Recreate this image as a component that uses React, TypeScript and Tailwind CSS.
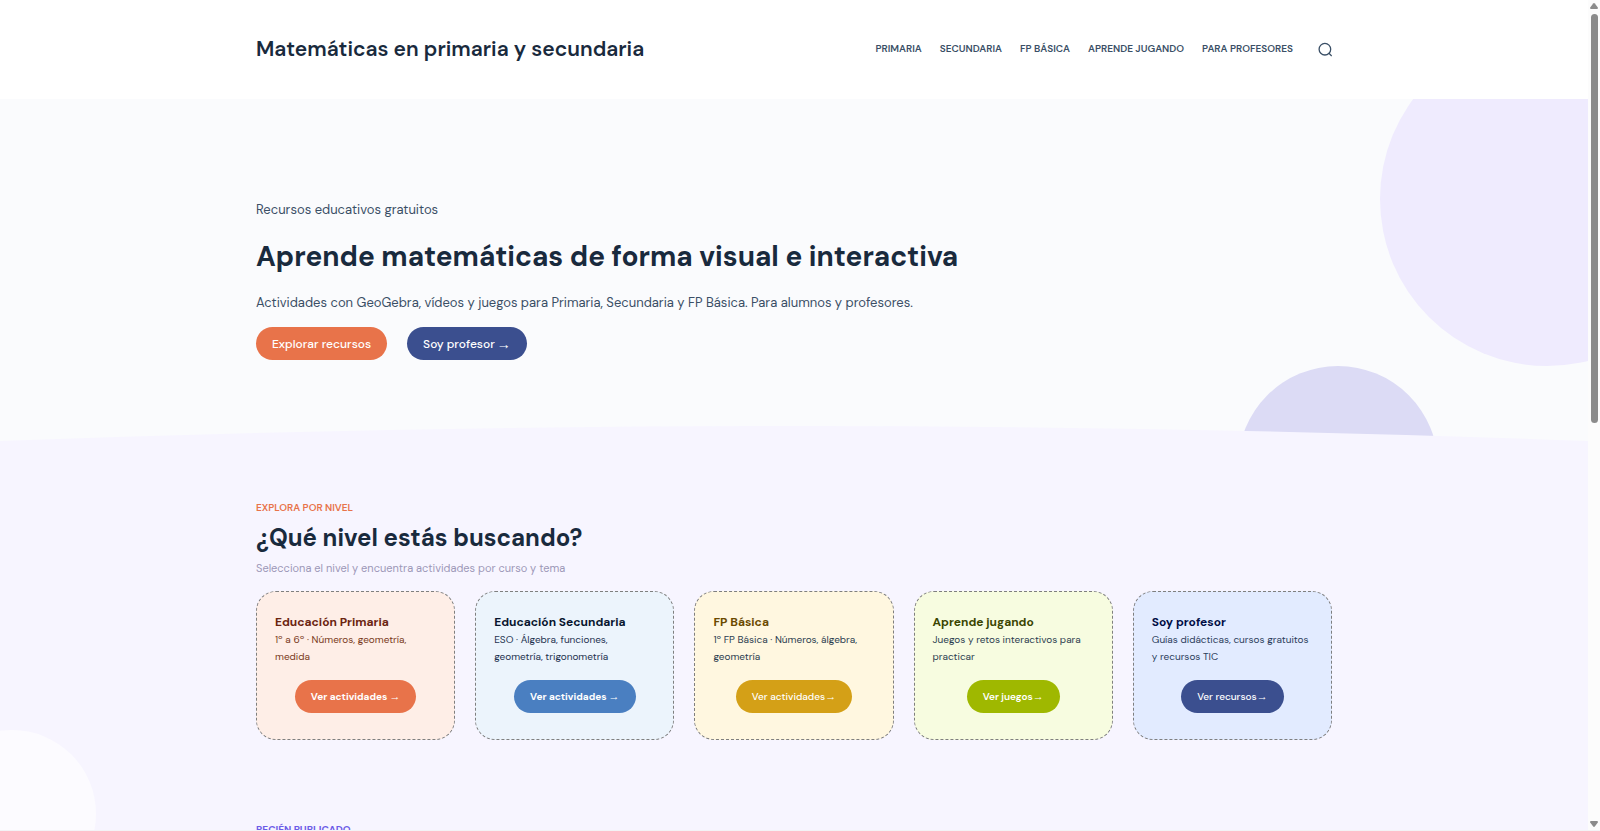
type Level = {
  title: string;
  text: string;
  action: string;
  spaced?: boolean;
  card: string;
  heading: string;
  body: string;
  button: string;
};

const navItems = ["Primaria", "Secundaria", "FP Básica", "Aprende jugando", "Para profesores"];

const levels: Level[] = [
  {
    title: "Educación Primaria",
    text: "1º a 6º · Números, geometría, medida",
    action: "Ver actividades",
    spaced: true,
    card: "bg-[#feeee7]",
    heading: "text-[#6b2410]",
    body: "text-[#7a3b22]",
    button: "bg-[#e8734a] font-bold",
  },
  {
    title: "Educación Secundaria",
    text: "ESO · Álgebra, funciones, geometría, trigonometría",
    action: "Ver actividades",
    spaced: true,
    card: "bg-[#ecf4fc]",
    heading: "text-[#08152e]",
    body: "text-[#1f3350]",
    button: "bg-[#4a7fc1] font-bold",
  },
  {
    title: "FP Básica",
    text: "1º FP Básica · Números, álgebra, geometría",
    action: "Ver actividades",
    card: "bg-[#fff7e0]",
    heading: "text-[#6b4a00]",
    body: "text-[#2c3e50]",
    button: "bg-[#d4a017] font-medium",
  },
  {
    title: "Aprende jugando",
    text: "Juegos y retos interactivos para practicar",
    action: "Ver juegos",
    card: "bg-[#f7fce0]",
    heading: "text-[#3a4500]",
    body: "text-[#2c3e50]",
    button: "bg-[#9fb800] font-semibold",
  },
  {
    title: "Soy profesor",
    text: "Guías didácticas, cursos gratuitos y recursos TIC",
    action: "Ver recursos",
    card: "bg-[#e2ebff]",
    heading: "text-[#000d45]",
    body: "text-[#2c3e5c]",
    button: "bg-[#3b4f8f] font-medium",
  },
];

function Arrow({ className }: { className: string }) {
  return <span className={`font-['Liberation_Sans',sans-serif] leading-none font-normal ${className}`}>→</span>;
}

function SearchIcon() {
  return (
    <svg viewBox="0 0 15 15" className="size-[15px]" fill="none" stroke="currentColor" strokeWidth="1.3" aria-hidden="true">
      <circle cx="7.9" cy="7.2" r="5.8" />
      <path d="M12 11.3l2.7 2.8" />
    </svg>
  );
}

function Header() {
  return (
    <header className="bg-white">
      <div className="mx-auto flex h-[99px] max-w-[1076px] items-center justify-between">
        <a href="#inicio" className="text-[21px] font-semibold text-[#192a3d]">
          Matemáticas en primaria y secundaria
        </a>
        <div className="flex items-center gap-6">
          <nav className="flex items-center gap-[18px] pb-[2px] text-[10px] font-semibold uppercase text-[#3a4f66]">
            {navItems.map((item) => (
              <a key={item} href="#niveles">
                {item}
              </a>
            ))}
          </nav>
          <button type="button" aria-label="Buscar" className="text-[#3a4f66]">
            <SearchIcon />
          </button>
        </div>
      </div>
    </header>
  );
}

function Hero() {
  return (
    <section id="inicio" className="relative overflow-hidden bg-[#fafbfd] pt-[101px] pb-[81px]">
      <div className="absolute -top-[67px] -right-[126px] size-[334px] rounded-full bg-[#efebfe]" />
      <div className="absolute top-[267px] right-[150px] size-[200px] rounded-full bg-[#dcdbf5]" />
      <svg
        viewBox="0 0 100 14"
        preserveAspectRatio="none"
        className="absolute bottom-0 left-0 h-[15px] w-full"
        fill="#f7f5ff"
        aria-hidden="true"
      >
        <path d="M0 14Q50 -14 100 14Z" />
      </svg>
      <div className="relative mx-auto max-w-[1076px]">
        <p className="text-[13px] leading-5 text-[#3a4f66]">Recursos educativos gratuitos</p>
        <h1 className="mt-4 text-[28px] leading-[42px] font-bold text-[#192a3d]">
          Aprende matemáticas de forma visual e interactiva
        </h1>
        <p className="mt-[15px] text-[13px] leading-5 text-[#3a4f66]">
          Actividades con GeoGebra, vídeos y juegos para Primaria, Secundaria y FP Básica. Para alumnos y profesores.
        </p>
        <div className="mt-[14px] flex gap-5 text-[12px] font-medium text-white">
          <a href="#niveles" className="flex h-[33px] items-center rounded-full bg-[#e8734a] px-4">
            Explorar recursos
          </a>
          <a href="#profesores" className="flex h-[33px] items-center gap-0.5 rounded-full bg-[#3b4f8f] px-4">
            Soy profesor <Arrow className="text-[14px]" />
          </a>
        </div>
      </div>
    </section>
  );
}

function LevelCard({ level }: { level: Level }) {
  return (
    <article
      className={`flex flex-col rounded-[20px] border border-dashed border-[#7f7f7f] px-[18px] pt-[21px] pb-[26px] ${level.card}`}
    >
      <h3 className={`text-[12px] leading-[18px] font-bold ${level.heading}`}>{level.title}</h3>
      <p className={`text-[10px] leading-[17px] ${level.body}`}>{level.text}</p>
      <a
        href="#niveles"
        className={`mt-[15px] flex h-[33px] items-center self-center rounded-full px-4 text-[10px] text-white ${level.button} ${level.spaced ? "gap-0.5" : ""}`}
      >
        {level.action}
        <Arrow className="text-[11px]" />
      </a>
    </article>
  );
}

function Levels() {
  return (
    <section id="niveles" className="relative bg-[#f7f5ff] pt-[58px] pb-20">
      <div className="absolute top-[289px] -left-[72px] size-[168px] rounded-full bg-[#fcfbff]" />
      <div className="relative mx-auto max-w-[1076px]">
        <p className="text-[10px] leading-[17px] font-semibold text-[#e8734a] uppercase">Explora por nivel</p>
        <h2 className="mt-1 text-[24px] leading-9 font-bold text-[#192a3d]">¿Qué nivel estás buscando?</h2>
        <p className="mt-[3px] text-[11px] leading-[18px] text-[#9d98b8]">
          Selecciona el nivel y encuentra actividades por curso y tema
        </p>
        <div className="mt-[14px] grid grid-cols-5 gap-5">
          {levels.map((level) => (
            <LevelCard key={level.title} level={level} />
          ))}
        </div>
        <p className="mt-[81px] text-[10px] leading-[17px] font-bold text-[#6c5ce7] uppercase">Recién publicado</p>
      </div>
    </section>
  );
}

function ScrollBar() {
  return (
    <div className="flex w-3 flex-none flex-col items-center bg-[#fcfcfc] py-[3px]" aria-hidden="true">
      <svg viewBox="0 0 8 6" className="h-[6px] w-2 flex-none" fill="#8b8b8b">
        <path d="M3.2 .5Q4 -.3 4.8 .5L7.8 4.6Q8.2 6 7 6H1Q-.2 6 .2 4.6Z" />
      </svg>
      <div className="mt-[5px] h-[49.6%] w-[7px] rounded-full bg-[#8b8b8b]" />
      <svg viewBox="0 0 8 6" className="mt-auto h-[6px] w-2 flex-none" fill="#8b8b8b">
        <path d="M3.2 5.5Q4 6.3 4.8 5.5L7.8 1.4Q8.2 0 7 0H1Q-.2 0 .2 1.4Z" />
      </svg>
    </div>
  );
}

export default function App() {
  return (
    <div className="flex h-screen overflow-hidden border-b border-[#f3f3f5] font-['DM_Sans',Inter,sans-serif]">
      <main className="min-w-0 flex-1 overflow-hidden">
        <Header />
        <Hero />
        <Levels />
      </main>
      <ScrollBar />
    </div>
  );
}
